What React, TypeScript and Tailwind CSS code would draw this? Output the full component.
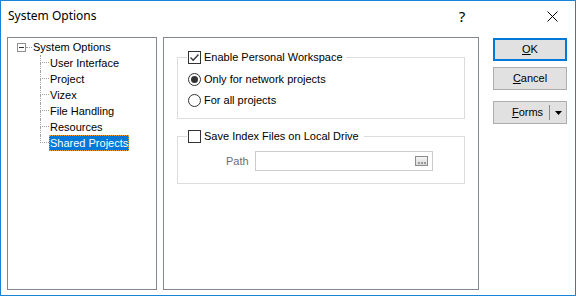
import React from "react";

const font = { fontFamily: '"Liberation Sans", Arial, sans-serif' };

function Checkbox({ checked }: { checked?: boolean }) {
  return (
    <span className="w-[13px] h-[13px] border border-[#333333] bg-white flex items-center justify-center shrink-0">
      {checked && (
        <svg width="11" height="11" viewBox="0 0 11 11">
          <path d="M1.5 5.5 L4.2 8.2 L9.5 2.5" fill="none" stroke="#333333" strokeWidth="1.3" />
        </svg>
      )}
    </span>
  );
}

function Radio({ checked }: { checked?: boolean }) {
  return (
    <span className="w-[13px] h-[13px] rounded-full border border-[#333333] bg-white flex items-center justify-center shrink-0">
      {checked && <span className="w-[7px] h-[7px] rounded-full bg-[#333333]" />}
    </span>
  );
}

function TreeChild({ label, last, selected }: { label: string; last?: boolean; selected?: boolean }) {
  return (
    <div className="flex h-[16px] items-stretch">
      <div className="w-[9px] flex flex-col">
        <div className="h-[8px] border-l border-dotted border-[#a0a0a0] flex flex-col justify-end">
          <div className="border-b border-dotted border-[#a0a0a0] ml-[1px]" />
        </div>
        <div className={`flex-1 ${last ? "" : "border-l border-dotted border-[#a0a0a0]"}`} />
      </div>
      <div
        className={`px-[1px] flex items-center leading-none h-[16px] ${
          selected ? "bg-[#0078d7] text-white outline outline-1 outline-dotted outline-[#f0a030] -outline-offset-1" : "text-black"
        }`}
      >
        {label}
      </div>
    </div>
  );
}

export default function App() {
  return (
    <div className="w-[576px] h-[296px] border border-[#1883d7] bg-white flex flex-col text-[11px] text-black" style={font}>
      {/* Title bar */}
      <div className="h-[36px] flex items-center shrink-0">
        <div className="pl-[7px] pb-[6px] text-[12px] text-black" style={{ fontFamily: '"Noto Sans", "Open Sans", sans-serif' }}>
          System Options
        </div>
        <div className="flex-1" />
        <div className="w-[46px] flex justify-center pb-[6px] text-[15px] text-black" style={{ fontFamily: '"Noto Sans", sans-serif' }}>
          ?
        </div>
        <div className="w-[44px]" />
        <div className="w-[46px] flex justify-center pb-[6px]">
          <svg width="11" height="11" viewBox="0 0 11 11">
            <path d="M0.5 0.5 L10.5 10.5 M10.5 0.5 L0.5 10.5" stroke="#000" strokeWidth="1" />
          </svg>
        </div>
      </div>

      {/* Body */}
      <div className="flex pl-[6px] h-[253px]">
        {/* Tree panel */}
        <div className="w-[150px] h-full border border-[#828790] bg-white pt-[1px] pl-[9px]">
          <div className="flex items-center h-[16px]">
            <span className="w-[9px] h-[9px] border border-[#919191] bg-white flex items-center justify-center">
              <span className="w-[5px] h-[1px] bg-[#333]" />
            </span>
            <span className="w-[6px] border-b border-dotted border-[#a0a0a0]" />
            <span className="px-[1px]">System Options</span>
          </div>
          <div className="pl-[23px]">
            <TreeChild label="User Interface" />
            <TreeChild label="Project" />
            <TreeChild label="Vizex" />
            <TreeChild label="File Handling" />
            <TreeChild label="Resources" />
            <TreeChild label="Shared Projects" last selected />
          </div>
        </div>

        {/* Options panel */}
        <div className="ml-[6px] w-[316px] h-full border border-[#828790] bg-white px-[13px] pt-[12px]">
          <fieldset className="border border-[#dcdcdc] h-[69px] m-0 p-0 pl-[10px] min-w-0">
            <legend className="ml-[-1px] px-[1px] flex items-center gap-[3px] h-[14px]">
              <Checkbox checked />
              <span className="pr-[2px]">Enable Personal Workspace</span>
            </legend>
            <div className="flex flex-col gap-[8px] pt-[9px]">
              <div className="flex items-center gap-[3px] h-[13px]">
                <Radio checked />
                <span>Only for network projects</span>
              </div>
              <div className="flex items-center gap-[3px] h-[13px]">
                <Radio />
                <span>For all projects</span>
              </div>
            </div>
          </fieldset>

          <fieldset className="mt-[10px] border border-[#dcdcdc] h-[55px] m-0 p-0 pl-[10px] min-w-0">
            <legend className="ml-[-1px] px-[1px] flex items-center gap-[3px] h-[14px]">
              <Checkbox />
              <span className="pr-[4px]">Save Index Files on Local Drive</span>
            </legend>
            <div className="flex items-center pt-[8px] pl-[38px]">
              <span className="text-[#6d6d6d] w-[29px]">Path</span>
              <div className="w-[178px] h-[20px] border border-[#cccccc] bg-white flex items-center justify-end pr-[4px]">
                <div className="w-[13px] h-[10px] border border-[#8c8c8c] bg-gradient-to-b from-[#f4f4f4] to-[#dadada] flex items-end justify-center gap-[1px] pb-[1px]">
                  <span className="w-[2px] h-[2px] bg-[#9a9a9a]" />
                  <span className="w-[2px] h-[2px] bg-[#9a9a9a]" />
                  <span className="w-[2px] h-[2px] bg-[#9a9a9a]" />
                </div>
              </div>
            </div>
          </fieldset>
        </div>

        {/* Buttons */}
        <div className="ml-[14px] w-[74px] flex flex-col pt-[1px]">
          <button className="h-[23px] w-full border-2 border-[#0078d7] bg-[#e1e1e1] flex items-center justify-center">
            <span><span className="underline">O</span>K</span>
          </button>
          <button className="mt-[6px] h-[23px] w-full border border-[#adadad] bg-[#e1e1e1] flex items-center justify-center">
            <span><span className="underline">C</span>ancel</span>
          </button>
          <button className="mt-[11px] h-[23px] w-full border border-[#adadad] bg-[#e1e1e1] flex items-center">
            <span className="flex-1 text-center pl-[12px]"><span className="underline">F</span>orms</span>
            <span className="w-[1px] h-[15px] bg-[#8a8a8a]" />
            <span className="w-[16px] flex items-center justify-center">
              <svg width="7" height="4" viewBox="0 0 7 4">
                <path d="M0 0 L7 0 L3.5 4 Z" fill="#000" />
              </svg>
            </span>
          </button>
        </div>
      </div>
    </div>
  );
}
